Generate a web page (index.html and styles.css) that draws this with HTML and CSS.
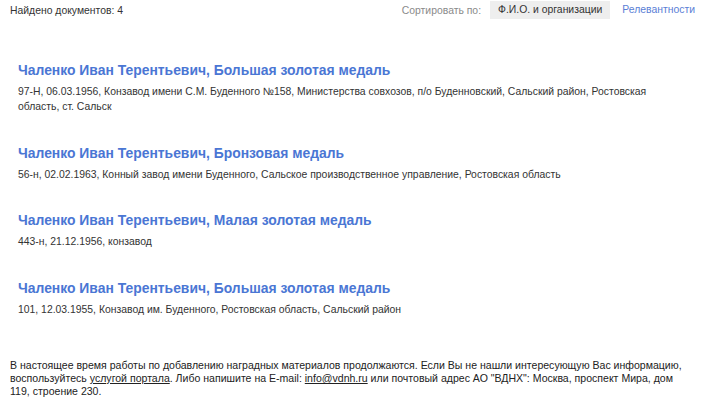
FILE: index.html
```html
<!DOCTYPE html>
<html lang="ru">
<head>
<meta charset="utf-8">
<link rel="stylesheet" href="styles.css">
</head>
<body>
<div class="page">
  <div class="topbar">
    <div class="found">Найдено документов: 4</div>
    <div class="sort">
      <span class="sort-label">Сортировать по:</span>
      <span class="sort-btn active">Ф.И.О. и организации</span>
      <a class="sort-btn link" href="#">Релевантности</a>
    </div>
  </div>
  <div class="results">
    <div class="item">
      <a class="title" href="#">Чаленко Иван Терентьевич, Большая золотая медаль</a>
      <div class="desc">97-Н, 06.03.1956, Конзавод имени С.М. Буденного №158, Министерства совхозов, п/о Буденновский, Сальский район, Ростовская область, ст. Сальск</div>
    </div>
    <div class="item">
      <a class="title" href="#">Чаленко Иван Терентьевич, Бронзовая медаль</a>
      <div class="desc">56-н, 02.02.1963, Конный завод имени Буденного, Сальское производственное управление, Ростовская область</div>
    </div>
    <div class="item">
      <a class="title" href="#">Чаленко Иван Терентьевич, Малая золотая медаль</a>
      <div class="desc">443-н, 21.12.1956, конзавод</div>
    </div>
    <div class="item">
      <a class="title" href="#">Чаленко Иван Терентьевич, Большая золотая медаль</a>
      <div class="desc">101, 12.03.1955, Конзавод им. Буденного, Ростовская область, Сальский район</div>
    </div>
  </div>
  <div class="footer">В настоящее время работы по добавлению наградных материалов продолжаются. Если Вы не нашли интересующую Вас информацию, воспользуйтесь <a href="#">услугой портала</a>. Либо напишите на E-mail: <a href="#">info@vdnh.ru</a> или почтовый адрес АО "ВДНХ": Москва, проспект Мира, дом 119, строение 230.</div>
</div>
</body>
</html>
```

FILE: styles.css
```css
html, body {
  margin: 0;
  padding: 0;
  background: #ffffff;
}
body {
  font-family: "Liberation Sans", Arial, sans-serif;
  font-size: 10.4px;
  color: #333333;
}
.page {
  padding: 0 13px 0 10px;
}
.topbar {
  display: flex;
  justify-content: space-between;
  align-items: center;
  height: 20px;
}
.sort {
  display: flex;
  align-items: center;
}
.sort-label {
  color: #8a8a8a;
  margin-right: 9px;
}
.sort-btn {
  display: inline-block;
  line-height: 18px;
  text-decoration: none;
}
.sort-btn.active {
  background: #eeeeee;
  color: #333333;
  padding: 0 8px;
}
.sort-btn.link {
  color: #5a80d6;
  margin-left: 12px;
}
.results {
  padding: 40px 8px 0 8px;
}
.item {
  margin-bottom: 28px;
}
.title {
  display: block;
  font-size: 13.9px;
  font-weight: bold;
  line-height: 20px;
  color: #4a76d4;
  text-decoration: none;
}
.desc {
  margin-top: 4px;
  line-height: 15.4px;
  color: #333333;
}
.footer {
  margin-top: 42px;
  font-size: 10.55px;
  line-height: 13px;
  color: #222222;
}
.footer a {
  color: #222222;
  text-decoration: underline;
}
```
